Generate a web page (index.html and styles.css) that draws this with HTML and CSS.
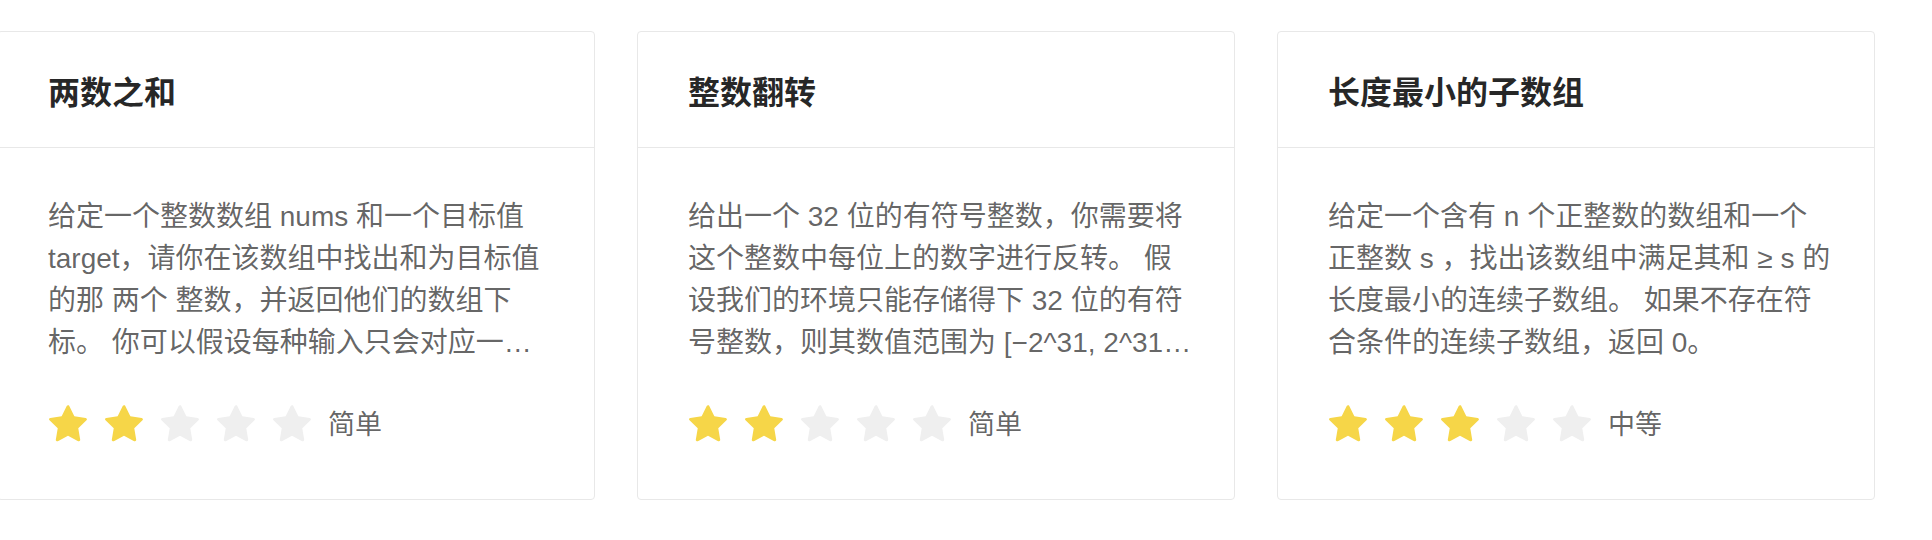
FILE: index.html
```html
<!DOCTYPE html>
<html lang="zh-CN">
<head>
<meta charset="utf-8">
<title>题目列表</title>
<link rel="stylesheet" href="styles.css">
</head>
<body>
<div class="row">
  <div class="card">
    <div class="card-head">两数之和</div>
    <div class="card-body">
      <p class="desc">给定一个整数数组 nums 和一个目标值 target，请你在该数组中找出和为目标值的那 两个 整数，并返回他们的数组下标。 你可以假设每种输入只会对应一个答案。但是，你不能重复利用这个数组中同样的元素。</p>
      <div class="rate">
        <svg class="star on" viewBox="64 64 896 896"><path d="M908.1 353.1l-253.9-36.9L540.7 86.1c-3.1-6.3-8.2-11.4-14.5-14.5-15.8-7.8-35-1.3-42.9 14.5L369.8 316.2l-253.9 36.9c-7 1-13.4 4.3-18.3 9.3a32.05 32.05 0 00.6 45.3l183.7 179.1-43.4 252.9a31.95 31.95 0 0046.4 33.7L512 754l227.1 119.4c6.2 3.3 13.4 4.4 20.3 3.2 17.4-3 29.1-19.5 26.1-36.9l-43.4-252.9 183.7-179.1c5-4.9 8.3-11.3 9.3-18.3 2.7-17.5-9.5-33.7-27-36.3z"/></svg>
        <svg class="star on" viewBox="64 64 896 896"><path d="M908.1 353.1l-253.9-36.9L540.7 86.1c-3.1-6.3-8.2-11.4-14.5-14.5-15.8-7.8-35-1.3-42.9 14.5L369.8 316.2l-253.9 36.9c-7 1-13.4 4.3-18.3 9.3a32.05 32.05 0 00.6 45.3l183.7 179.1-43.4 252.9a31.95 31.95 0 0046.4 33.7L512 754l227.1 119.4c6.2 3.3 13.4 4.4 20.3 3.2 17.4-3 29.1-19.5 26.1-36.9l-43.4-252.9 183.7-179.1c5-4.9 8.3-11.3 9.3-18.3 2.7-17.5-9.5-33.7-27-36.3z"/></svg>
        <svg class="star" viewBox="64 64 896 896"><path d="M908.1 353.1l-253.9-36.9L540.7 86.1c-3.1-6.3-8.2-11.4-14.5-14.5-15.8-7.8-35-1.3-42.9 14.5L369.8 316.2l-253.9 36.9c-7 1-13.4 4.3-18.3 9.3a32.05 32.05 0 00.6 45.3l183.7 179.1-43.4 252.9a31.95 31.95 0 0046.4 33.7L512 754l227.1 119.4c6.2 3.3 13.4 4.4 20.3 3.2 17.4-3 29.1-19.5 26.1-36.9l-43.4-252.9 183.7-179.1c5-4.9 8.3-11.3 9.3-18.3 2.7-17.5-9.5-33.7-27-36.3z"/></svg>
        <svg class="star" viewBox="64 64 896 896"><path d="M908.1 353.1l-253.9-36.9L540.7 86.1c-3.1-6.3-8.2-11.4-14.5-14.5-15.8-7.8-35-1.3-42.9 14.5L369.8 316.2l-253.9 36.9c-7 1-13.4 4.3-18.3 9.3a32.05 32.05 0 00.6 45.3l183.7 179.1-43.4 252.9a31.95 31.95 0 0046.4 33.7L512 754l227.1 119.4c6.2 3.3 13.4 4.4 20.3 3.2 17.4-3 29.1-19.5 26.1-36.9l-43.4-252.9 183.7-179.1c5-4.9 8.3-11.3 9.3-18.3 2.7-17.5-9.5-33.7-27-36.3z"/></svg>
        <svg class="star" viewBox="64 64 896 896"><path d="M908.1 353.1l-253.9-36.9L540.7 86.1c-3.1-6.3-8.2-11.4-14.5-14.5-15.8-7.8-35-1.3-42.9 14.5L369.8 316.2l-253.9 36.9c-7 1-13.4 4.3-18.3 9.3a32.05 32.05 0 00.6 45.3l183.7 179.1-43.4 252.9a31.95 31.95 0 0046.4 33.7L512 754l227.1 119.4c6.2 3.3 13.4 4.4 20.3 3.2 17.4-3 29.1-19.5 26.1-36.9l-43.4-252.9 183.7-179.1c5-4.9 8.3-11.3 9.3-18.3 2.7-17.5-9.5-33.7-27-36.3z"/></svg>
        <span class="level">简单</span>
      </div>
    </div>
  </div>

  <div class="card">
    <div class="card-head">整数翻转</div>
    <div class="card-body">
      <p class="desc">给出一个 32 位的有符号整数，你需要将这个整数中每位上的数字进行反转。 假设我们的环境只能存储得下 32 位的有符号整数，则其数值范围为 [−2^31, 2^31 − 1]。请根据这个假设，如果反转后整数溢出那么就返回 0。</p>
      <div class="rate">
        <svg class="star on" viewBox="64 64 896 896"><path d="M908.1 353.1l-253.9-36.9L540.7 86.1c-3.1-6.3-8.2-11.4-14.5-14.5-15.8-7.8-35-1.3-42.9 14.5L369.8 316.2l-253.9 36.9c-7 1-13.4 4.3-18.3 9.3a32.05 32.05 0 00.6 45.3l183.7 179.1-43.4 252.9a31.95 31.950 0 0046.4 33.7L512 754l227.1 119.4c6.2 3.3 13.4 4.4 20.3 3.2 17.4-3 29.1-19.5 26.1-36.9l-43.4-252.9 183.7-179.1c5-4.9 8.3-11.3 9.3-18.3 2.7-17.5-9.5-33.7-27-36.3z"/></svg>
        <svg class="star on" viewBox="64 64 896 896"><path d="M908.1 353.1l-253.9-36.9L540.7 86.1c-3.1-6.3-8.2-11.4-14.5-14.5-15.8-7.8-35-1.3-42.9 14.5L369.8 316.2l-253.9 36.9c-7 1-13.4 4.3-18.3 9.3a32.05 32.05 0 00.6 45.3l183.7 179.1-43.4 252.9a31.95 31.95 0 0046.4 33.7L512 754l227.1 119.4c6.2 3.3 13.4 4.4 20.3 3.2 17.4-3 29.1-19.5 26.1-36.9l-43.4-252.9 183.7-179.1c5-4.9 8.3-11.3 9.3-18.3 2.7-17.5-9.5-33.7-27-36.3z"/></svg>
        <svg class="star" viewBox="64 64 896 896"><path d="M908.1 353.1l-253.9-36.9L540.7 86.1c-3.1-6.3-8.2-11.4-14.5-14.5-15.8-7.8-35-1.3-42.9 14.5L369.8 316.2l-253.9 36.9c-7 1-13.4 4.3-18.3 9.3a32.05 32.05 0 00.6 45.3l183.7 179.1-43.4 252.9a31.95 31.95 0 0046.4 33.7L512 754l227.1 119.4c6.2 3.3 13.4 4.4 20.3 3.2 17.4-3 29.1-19.5 26.1-36.9l-43.4-252.9 183.7-179.1c5-4.9 8.3-11.3 9.3-18.3 2.7-17.5-9.5-33.7-27-36.3z"/></svg>
        <svg class="star" viewBox="64 64 896 896"><path d="M908.1 353.1l-253.9-36.9L540.7 86.1c-3.1-6.3-8.2-11.4-14.5-14.5-15.8-7.8-35-1.3-42.9 14.5L369.8 316.2l-253.9 36.9c-7 1-13.4 4.3-18.3 9.3a32.05 32.05 0 00.6 45.3l183.7 179.1-43.4 252.9a31.95 31.95 0 0046.4 33.7L512 754l227.1 119.4c6.2 3.3 13.4 4.4 20.3 3.2 17.4-3 29.1-19.5 26.1-36.9l-43.4-252.9 183.7-179.1c5-4.9 8.3-11.3 9.3-18.3 2.7-17.5-9.5-33.7-27-36.3z"/></svg>
        <svg class="star" viewBox="64 64 896 896"><path d="M908.1 353.1l-253.9-36.9L540.7 86.1c-3.1-6.3-8.2-11.4-14.5-14.5-15.8-7.8-35-1.3-42.9 14.5L369.8 316.2l-253.9 36.9c-7 1-13.4 4.3-18.3 9.3a32.05 32.05 0 00.6 45.3l183.7 179.1-43.4 252.9a31.95 31.95 0 0046.4 33.7L512 754l227.1 119.4c6.2 3.3 13.4 4.4 20.3 3.2 17.4-3 29.1-19.5 26.1-36.9l-43.4-252.9 183.7-179.1c5-4.9 8.3-11.3 9.3-18.3 2.7-17.5-9.5-33.7-27-36.3z"/></svg>
        <span class="level">简单</span>
      </div>
    </div>
  </div>

  <div class="card">
    <div class="card-head">长度最小的子数组</div>
    <div class="card-body">
      <p class="desc">给定一个含有 n 个正整数的数组和一个正整数 s ，找出该数组中满足其和 ≥ s 的长度最小的连续子数组。 如果不存在符合条件的连续子数组，返回 0。</p>
      <div class="rate">
        <svg class="star on" viewBox="64 64 896 896"><path d="M908.1 353.1l-253.9-36.9L540.7 86.1c-3.1-6.3-8.2-11.4-14.5-14.5-15.8-7.8-35-1.3-42.9 14.5L369.8 316.2l-253.9 36.9c-7 1-13.4 4.3-18.3 9.3a32.05 32.05 0 00.6 45.3l183.7 179.1-43.4 252.9a31.95 31.95 0 0046.4 33.7L512 754l227.1 119.4c6.2 3.3 13.4 4.4 20.3 3.2 17.4-3 29.1-19.5 26.1-36.9l-43.4-252.9 183.7-179.1c5-4.9 8.3-11.3 9.3-18.3 2.7-17.5-9.5-33.7-27-36.3z"/></svg>
        <svg class="star on" viewBox="64 64 896 896"><path d="M908.1 353.1l-253.9-36.9L540.7 86.1c-3.1-6.3-8.2-11.4-14.5-14.5-15.8-7.8-35-1.3-42.9 14.5L369.8 316.2l-253.9 36.9c-7 1-13.4 4.3-18.3 9.3a32.05 32.05 0 00.6 45.3l183.7 179.1-43.4 252.9a31.95 31.95 0 0046.4 33.7L512 754l227.1 119.4c6.2 3.3 13.4 4.4 20.3 3.2 17.4-3 29.1-19.5 26.1-36.9l-43.4-252.9 183.7-179.1c5-4.9 8.3-11.3 9.3-18.3 2.7-17.5-9.5-33.7-27-36.3z"/></svg>
        <svg class="star on" viewBox="64 64 896 896"><path d="M908.1 353.1l-253.9-36.9L540.7 86.1c-3.1-6.3-8.2-11.4-14.5-14.5-15.8-7.8-35-1.3-42.9 14.5L369.8 316.2l-253.9 36.9c-7 1-13.4 4.3-18.3 9.3a32.05 32.05 0 00.6 45.3l183.7 179.1-43.4 252.9a31.95 31.95 0 0046.4 33.7L512 754l227.1 119.4c6.2 3.3 13.4 4.4 20.3 3.2 17.4-3 29.1-19.5 26.1-36.9l-43.4-252.9 183.7-179.1c5-4.9 8.3-11.3 9.3-18.3 2.7-17.5-9.5-33.7-27-36.3z"/></svg>
        <svg class="star" viewBox="64 64 896 896"><path d="M908.1 353.1l-253.9-36.9L540.7 86.1c-3.1-6.3-8.2-11.4-14.5-14.5-15.8-7.8-35-1.3-42.9 14.5L369.8 316.2l-253.9 36.9c-7 1-13.4 4.3-18.3 9.3a32.05 32.05 0 00.6 45.3l183.7 179.1-43.4 252.9a31.95 31.95 0 0046.4 33.7L512 754l227.1 119.4c6.2 3.3 13.4 4.4 20.3 3.2 17.4-3 29.1-19.5 26.1-36.9l-43.4-252.9 183.7-179.1c5-4.9 8.3-11.3 9.3-18.3 2.7-17.5-9.5-33.7-27-36.3z"/></svg>
        <svg class="star" viewBox="64 64 896 896"><path d="M908.1 353.1l-253.9-36.9L540.7 86.1c-3.1-6.3-8.2-11.4-14.5-14.5-15.8-7.8-35-1.3-42.9 14.5L369.8 316.2l-253.9 36.9c-7 1-13.4 4.3-18.3 9.3a32.05 32.05 0 00.6 45.3l183.7 179.1-43.4 252.9a31.95 31.95 0 0046.4 33.7L512 754l227.1 119.4c6.2 3.3 13.4 4.4 20.3 3.2 17.4-3 29.1-19.5 26.1-36.9l-43.4-252.9 183.7-179.1c5-4.9 8.3-11.3 9.3-18.3 2.7-17.5-9.5-33.7-27-36.3z"/></svg>
        <span class="level">中等</span>
      </div>
    </div>
  </div>
</div>
</body>
</html>
```

FILE: styles.css
```css
* {
  box-sizing: border-box;
}

html, body {
  margin: 0;
  padding: 0;
  background: #ffffff;
}

body {
  font-family: "Liberation Sans", "Noto Sans CJK SC", sans-serif;
  color: rgba(0, 0, 0, 0.65);
}

.row {
  display: flex;
  gap: 42px;
  margin-left: -3px;
  padding-top: 31px;
}

.card {
  flex: 0 0 598px;
  width: 598px;
  border: 1px solid #e8e8e8;
  border-radius: 4px;
  background: #fff;
}

.card-head {
  height: 116px;
  display: flex;
  align-items: center;
  padding: 0 41px 0 50px;
  border-bottom: 1px solid #e8e8e8;
  font-size: 32px;
  font-weight: 600;
  color: rgba(0, 0, 0, 0.85);
}

.card-body {
  padding: 48px 41px 54px 50px;
}

.desc {
  margin: 0;
  font-size: 28px;
  line-height: 42px;
  height: 168px;
  color: rgba(0, 0, 0, 0.62);
  display: -webkit-box;
  -webkit-line-clamp: 4;
  -webkit-box-orient: vertical;
  overflow: hidden;
}

.rate {
  display: flex;
  align-items: center;
  height: 40px;
  margin-top: 41px;
}

.star {
  width: 40px;
  height: 40px;
  margin-right: 16px;
  fill: #efefef;
  flex: none;
}

.star.on {
  fill: #f6d648;
}

.level {
  font-size: 27px;
  line-height: 40px;
  color: rgba(0, 0, 0, 0.62);
}
```
